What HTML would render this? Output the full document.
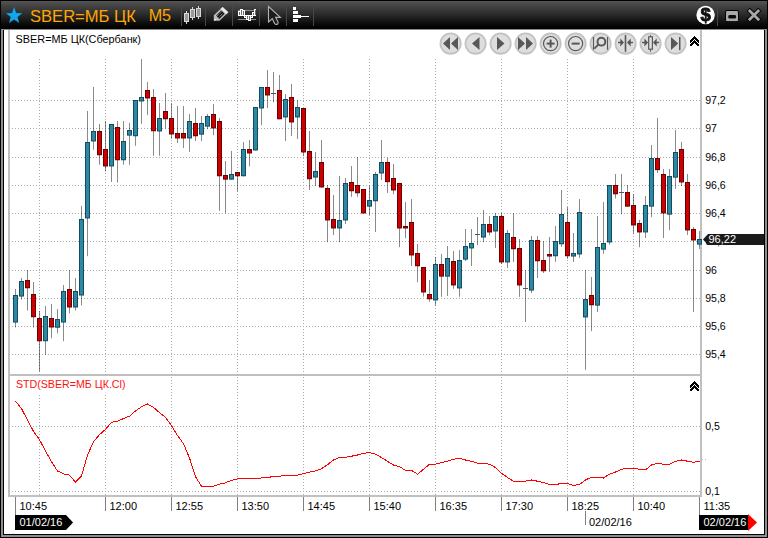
<!DOCTYPE html>
<html lang="ru"><head><meta charset="utf-8"><title>SBER=МБ ЦК M5</title>
<style>
html,body{margin:0;padding:0;background:#000;}
body{width:768px;height:538px;overflow:hidden;position:relative;}
svg{position:absolute;left:0;top:0;display:block;}
text{font-family:"Liberation Sans",sans-serif;}
.t11{font-size:11px;fill:#000;}
.w11{font-size:11px;fill:#fff;}
.ce{shape-rendering:crispEdges;}
</style></head><body>
<svg width="768" height="538" viewBox="0 0 768 538">
<defs>
<linearGradient id="tb" x1="0" y1="0" x2="0" y2="1">
<stop offset="0" stop-color="#555555"/><stop offset="0.12" stop-color="#484848"/><stop offset="0.5" stop-color="#292929"/><stop offset="0.85" stop-color="#080808"/><stop offset="1" stop-color="#000000"/>
</linearGradient>
<radialGradient id="btn" cx="0.5" cy="0.5" r="0.5">
<stop offset="0" stop-color="#e2e2e2"/><stop offset="0.8" stop-color="#dedede"/><stop offset="0.86" stop-color="#c6c6c6"/><stop offset="0.95" stop-color="#cccccc"/><stop offset="1" stop-color="#e8e8e8"/>
</radialGradient>
<filter id="nf" x="-20%" y="-20%" width="140%" height="140%" color-interpolation-filters="sRGB"><feOffset dx="0" dy="0"/></filter>
</defs>

<g class="ce">
<rect x="0" y="0" width="768" height="538" fill="#000"/>
<rect x="1" y="1" width="766" height="28" fill="url(#tb)"/>
<rect x="1" y="29" width="766" height="508" fill="#8e8e8e"/>
<rect x="3" y="30" width="762" height="505" fill="#000"/>
<rect x="4" y="30" width="760" height="504" fill="#fff"/>
<rect x="3" y="29" width="762" height="1" fill="#8a8a8a"/>
<rect x="8" y="30" width="2" height="467" fill="#c0c0c0"/>
<rect x="700" y="30" width="2" height="467" fill="#c0c0c0"/>
<rect x="8" y="495" width="694" height="2" fill="#c0c0c0"/>
<rect x="8" y="374" width="694" height="2" fill="#c0c0c0"/>
</g>
<g class="ce" stroke="#acacac" stroke-width="1" stroke-dasharray="1 2" fill="none">
<path d="M9 100.5H700"/>
<path d="M9 128.5H700"/>
<path d="M9 157.5H700"/>
<path d="M9 185.5H700"/>
<path d="M9 213.5H700"/>
<path d="M9 241.5H700"/>
<path d="M9 270.5H700"/>
<path d="M9 298.5H700"/>
<path d="M9 326.5H700"/>
<path d="M9 354.5H700"/>
<path d="M9 426.5H700"/>
<path d="M9 491.5H700"/>
<path d="M39.5 59V495"/>
<path d="M105.5 59V495"/>
<path d="M171.5 59V495"/>
<path d="M237.5 59V495"/>
<path d="M303.5 59V495"/>
<path d="M369.5 59V495"/>
<path d="M435.5 59V495"/>
<path d="M501.5 59V495"/>
<path d="M567.5 59V495"/>
<path d="M633.5 59V495"/>
</g>
<rect class="ce" x="10" y="376" width="118" height="18" fill="#fff"/>
<g class="ce" fill="#000" fill-opacity="0.46">
<rect x="15" y="289" width="1" height="38"/>
<rect x="15" y="327" width="1" height="1" fill-opacity="0.18"/>
<rect x="21" y="278" width="1" height="21"/>
<rect x="21" y="299" width="1" height="1" fill-opacity="0.23"/>
<rect x="27" y="270" width="1" height="40"/>
<rect x="27" y="310" width="1" height="1" fill-opacity="0.23"/>
<rect x="33" y="282" width="1" height="45"/>
<rect x="33" y="327" width="1" height="1" fill-opacity="0.23"/>
<rect x="39" y="311" width="1" height="60"/>
<rect x="39" y="371" width="1" height="1" fill-opacity="0.23"/>
<rect x="45" y="306" width="1" height="48"/>
<rect x="45" y="354" width="1" height="1" fill-opacity="0.37"/>
<rect x="51" y="304" width="1" height="34"/>
<rect x="51" y="338" width="1" height="1" fill-opacity="0.09"/>
<rect x="57" y="309" width="1" height="24"/>
<rect x="57" y="333" width="1" height="1" fill-opacity="0.12"/>
<rect x="63" y="285" width="1" height="56"/>
<rect x="63" y="341" width="1" height="1" fill-opacity="0.09"/>
<rect x="69" y="270" width="1" height="43"/>
<rect x="69" y="313" width="1" height="1" fill-opacity="0.23"/>
<rect x="75" y="278" width="1" height="32"/>
<rect x="75" y="310" width="1" height="1" fill-opacity="0.23"/>
<rect x="81" y="206" width="1" height="99"/>
<rect x="81" y="305" width="1" height="1" fill-opacity="0.23"/>
<rect x="87" y="111" width="1" height="145"/>
<rect x="87" y="256" width="1" height="1" fill-opacity="0.09"/>
<rect x="93" y="87" width="1" height="62"/>
<rect x="93" y="149" width="1" height="1" fill-opacity="0.37"/>
<rect x="99" y="124" width="1" height="40"/>
<rect x="99" y="164" width="1" height="1" fill-opacity="0.37"/>
<rect x="105" y="121" width="1" height="50"/>
<rect x="105" y="171" width="1" height="1" fill-opacity="0.23"/>
<rect x="111" y="124" width="1" height="58"/>
<rect x="117" y="121" width="1" height="61"/>
<rect x="117" y="182" width="1" height="1" fill-opacity="0.23"/>
<rect x="123" y="121" width="1" height="43"/>
<rect x="123" y="164" width="1" height="1" fill-opacity="0.37"/>
<rect x="129" y="123" width="1" height="41"/>
<rect x="129" y="164" width="1" height="1" fill-opacity="0.37"/>
<rect x="135" y="100" width="1" height="45"/>
<rect x="135" y="145" width="1" height="1" fill-opacity="0.37"/>
<rect x="141" y="59" width="1" height="64"/>
<rect x="141" y="123" width="1" height="1" fill-opacity="0.37"/>
<rect x="147" y="82" width="1" height="33"/>
<rect x="147" y="115" width="1" height="1" fill-opacity="0.05"/>
<rect x="153" y="89" width="1" height="66"/>
<rect x="153" y="155" width="1" height="1" fill-opacity="0.37"/>
<rect x="159" y="103" width="1" height="52"/>
<rect x="159" y="155" width="1" height="1" fill-opacity="0.37"/>
<rect x="165" y="93" width="1" height="35"/>
<rect x="165" y="128" width="1" height="1" fill-opacity="0.32"/>
<rect x="171" y="103" width="1" height="35"/>
<rect x="171" y="138" width="1" height="1" fill-opacity="0.37"/>
<rect x="177" y="106" width="1" height="37"/>
<rect x="183" y="106" width="1" height="42"/>
<rect x="189" y="114" width="1" height="37"/>
<rect x="189" y="151" width="1" height="1" fill-opacity="0.37"/>
<rect x="195" y="108" width="1" height="33"/>
<rect x="201" y="116" width="1" height="25"/>
<rect x="207" y="114" width="1" height="15"/>
<rect x="207" y="129" width="1" height="1" fill-opacity="0.09"/>
<rect x="213" y="104" width="1" height="31"/>
<rect x="213" y="135" width="1" height="1" fill-opacity="0.09"/>
<rect x="219" y="118" width="1" height="92"/>
<rect x="219" y="210" width="1" height="1" fill-opacity="0.37"/>
<rect x="225" y="161" width="1" height="52"/>
<rect x="225" y="213" width="1" height="1" fill-opacity="0.14"/>
<rect x="231" y="151" width="1" height="28"/>
<rect x="231" y="179" width="1" height="1" fill-opacity="0.32"/>
<rect x="237" y="172" width="1" height="19"/>
<rect x="237" y="191" width="1" height="1" fill-opacity="0.14"/>
<rect x="243" y="142" width="1" height="34"/>
<rect x="243" y="176" width="1" height="1" fill-opacity="0.14"/>
<rect x="249" y="140" width="1" height="26"/>
<rect x="249" y="166" width="1" height="1" fill-opacity="0.14"/>
<rect x="255" y="107" width="1" height="43"/>
<rect x="255" y="150" width="1" height="1" fill-opacity="0.23"/>
<rect x="261" y="87" width="1" height="38"/>
<rect x="261" y="125" width="1" height="1" fill-opacity="0.05"/>
<rect x="267" y="70" width="1" height="38"/>
<rect x="273" y="72" width="1" height="30"/>
<rect x="273" y="102" width="1" height="1" fill-opacity="0.09"/>
<rect x="279" y="75" width="1" height="44"/>
<rect x="279" y="119" width="1" height="1" fill-opacity="0.14"/>
<rect x="285" y="94" width="1" height="47"/>
<rect x="291" y="84" width="1" height="52"/>
<rect x="297" y="100" width="1" height="39"/>
<rect x="303" y="108" width="1" height="48"/>
<rect x="309" y="131" width="1" height="59"/>
<rect x="309" y="190" width="1" height="1" fill-opacity="0.05"/>
<rect x="315" y="152" width="1" height="34"/>
<rect x="321" y="140" width="1" height="47"/>
<rect x="321" y="187" width="1" height="1" fill-opacity="0.23"/>
<rect x="327" y="185" width="1" height="57"/>
<rect x="327" y="242" width="1" height="1" fill-opacity="0.09"/>
<rect x="333" y="195" width="1" height="40"/>
<rect x="339" y="176" width="1" height="66"/>
<rect x="339" y="242" width="1" height="1" fill-opacity="0.09"/>
<rect x="345" y="178" width="1" height="46"/>
<rect x="351" y="166" width="1" height="30"/>
<rect x="351" y="196" width="1" height="1" fill-opacity="0.37"/>
<rect x="357" y="157" width="1" height="39"/>
<rect x="357" y="196" width="1" height="1" fill-opacity="0.37"/>
<rect x="363" y="189" width="1" height="24"/>
<rect x="363" y="213" width="1" height="1" fill-opacity="0.23"/>
<rect x="369" y="185" width="1" height="30"/>
<rect x="369" y="215" width="1" height="1" fill-opacity="0.09"/>
<rect x="375" y="172" width="1" height="60"/>
<rect x="381" y="140" width="1" height="40"/>
<rect x="387" y="158" width="1" height="35"/>
<rect x="393" y="164" width="1" height="30"/>
<rect x="393" y="194" width="1" height="1" fill-opacity="0.09"/>
<rect x="399" y="183" width="1" height="64"/>
<rect x="399" y="247" width="1" height="1" fill-opacity="0.09"/>
<rect x="405" y="202" width="1" height="36"/>
<rect x="405" y="238" width="1" height="1" fill-opacity="0.09"/>
<rect x="411" y="199" width="1" height="67"/>
<rect x="417" y="244" width="1" height="38"/>
<rect x="417" y="282" width="1" height="1" fill-opacity="0.09"/>
<rect x="423" y="267" width="1" height="29"/>
<rect x="423" y="296" width="1" height="1" fill-opacity="0.32"/>
<rect x="429" y="280" width="1" height="21"/>
<rect x="429" y="301" width="1" height="1" fill-opacity="0.32"/>
<rect x="435" y="257" width="1" height="48"/>
<rect x="435" y="305" width="1" height="1" fill-opacity="0.23"/>
<rect x="441" y="254" width="1" height="42"/>
<rect x="441" y="296" width="1" height="1" fill-opacity="0.37"/>
<rect x="447" y="246" width="1" height="50"/>
<rect x="453" y="251" width="1" height="37"/>
<rect x="453" y="288" width="1" height="1" fill-opacity="0.37"/>
<rect x="459" y="250" width="1" height="46"/>
<rect x="459" y="296" width="1" height="1" fill-opacity="0.37"/>
<rect x="465" y="229" width="1" height="32"/>
<rect x="471" y="229" width="1" height="37"/>
<rect x="477" y="217" width="1" height="28"/>
<rect x="477" y="245" width="1" height="1" fill-opacity="0.05"/>
<rect x="483" y="210" width="1" height="32"/>
<rect x="483" y="242" width="1" height="1" fill-opacity="0.09"/>
<rect x="489" y="216" width="1" height="19"/>
<rect x="489" y="235" width="1" height="1" fill-opacity="0.09"/>
<rect x="495" y="213" width="1" height="35"/>
<rect x="501" y="213" width="1" height="51"/>
<rect x="507" y="230" width="1" height="38"/>
<rect x="513" y="213" width="1" height="49"/>
<rect x="519" y="239" width="1" height="57"/>
<rect x="519" y="296" width="1" height="1" fill-opacity="0.41"/>
<rect x="525" y="270" width="1" height="52"/>
<rect x="531" y="236" width="1" height="56"/>
<rect x="531" y="292" width="1" height="1" fill-opacity="0.41"/>
<rect x="537" y="236" width="1" height="42"/>
<rect x="543" y="241" width="1" height="32"/>
<rect x="549" y="237" width="1" height="34"/>
<rect x="549" y="271" width="1" height="1" fill-opacity="0.37"/>
<rect x="555" y="226" width="1" height="35"/>
<rect x="555" y="261" width="1" height="1" fill-opacity="0.37"/>
<rect x="561" y="190" width="1" height="56"/>
<rect x="561" y="246" width="1" height="1" fill-opacity="0.37"/>
<rect x="567" y="207" width="1" height="51"/>
<rect x="567" y="258" width="1" height="1" fill-opacity="0.37"/>
<rect x="573" y="233" width="1" height="29"/>
<rect x="579" y="199" width="1" height="59"/>
<rect x="585" y="270" width="1" height="99"/>
<rect x="585" y="369" width="1" height="1" fill-opacity="0.37"/>
<rect x="591" y="277" width="1" height="54"/>
<rect x="591" y="331" width="1" height="1" fill-opacity="0.09"/>
<rect x="597" y="216" width="1" height="96"/>
<rect x="603" y="202" width="1" height="51"/>
<rect x="603" y="253" width="1" height="1" fill-opacity="0.37"/>
<rect x="609" y="185" width="1" height="59"/>
<rect x="609" y="244" width="1" height="1" fill-opacity="0.32"/>
<rect x="615" y="174" width="1" height="24"/>
<rect x="615" y="198" width="1" height="1" fill-opacity="0.23"/>
<rect x="621" y="174" width="1" height="40"/>
<rect x="621" y="214" width="1" height="1" fill-opacity="0.14"/>
<rect x="627" y="185" width="1" height="21"/>
<rect x="627" y="206" width="1" height="1" fill-opacity="0.32"/>
<rect x="633" y="194" width="1" height="39"/>
<rect x="633" y="233" width="1" height="1" fill-opacity="0.37"/>
<rect x="639" y="220" width="1" height="27"/>
<rect x="639" y="247" width="1" height="1" fill-opacity="0.09"/>
<rect x="645" y="196" width="1" height="42"/>
<rect x="651" y="145" width="1" height="72"/>
<rect x="651" y="217" width="1" height="1" fill-opacity="0.09"/>
<rect x="657" y="118" width="1" height="55"/>
<rect x="663" y="169" width="1" height="69"/>
<rect x="669" y="169" width="1" height="61"/>
<rect x="669" y="230" width="1" height="1" fill-opacity="0.09"/>
<rect x="675" y="130" width="1" height="58"/>
<rect x="675" y="188" width="1" height="1" fill-opacity="0.37"/>
<rect x="681" y="142" width="1" height="44"/>
<rect x="687" y="174" width="1" height="61"/>
<rect x="693" y="227" width="1" height="85"/>
<rect x="699" y="231" width="1" height="18"/>
</g><g class="ce">
<rect x="13" y="295" width="5" height="27" fill="#114c60"/>
<rect x="13" y="322" width="5" height="1" fill="#114c60" fill-opacity="0.55"/>
<rect x="14" y="296" width="3" height="25" fill="#2f88a2"/>
<rect x="14" y="321" width="3" height="1" fill="#2f88a2" fill-opacity="0.55"/>
<rect x="19" y="281" width="5" height="15" fill="#114c60"/>
<rect x="19" y="296" width="5" height="1" fill="#114c60" fill-opacity="0.55"/>
<rect x="20" y="282" width="3" height="13" fill="#2f88a2"/>
<rect x="20" y="295" width="3" height="1" fill="#2f88a2" fill-opacity="0.55"/>
<rect x="25" y="280" width="5" height="8" fill="#6a0000"/>
<rect x="25" y="288" width="5" height="1" fill="#6a0000" fill-opacity="0.25"/>
<rect x="26" y="281" width="3" height="6" fill="#cc0000"/>
<rect x="26" y="287" width="3" height="1" fill="#cc0000" fill-opacity="0.25"/>
<rect x="31" y="294" width="5" height="23" fill="#6a0000"/>
<rect x="31" y="317" width="5" height="1" fill="#6a0000" fill-opacity="0.25"/>
<rect x="32" y="295" width="3" height="21" fill="#cc0000"/>
<rect x="32" y="316" width="3" height="1" fill="#cc0000" fill-opacity="0.25"/>
<rect x="37" y="318" width="5" height="23" fill="#6a0000"/>
<rect x="37" y="341" width="5" height="1" fill="#6a0000" fill-opacity="0.25"/>
<rect x="38" y="319" width="3" height="21" fill="#cc0000"/>
<rect x="38" y="340" width="3" height="1" fill="#cc0000" fill-opacity="0.25"/>
<rect x="43" y="316" width="5" height="25" fill="#114c60"/>
<rect x="43" y="341" width="5" height="1" fill="#114c60" fill-opacity="0.25"/>
<rect x="44" y="317" width="3" height="23" fill="#2f88a2"/>
<rect x="44" y="340" width="3" height="1" fill="#2f88a2" fill-opacity="0.25"/>
<rect x="49" y="318" width="5" height="9" fill="#6a0000"/>
<rect x="49" y="327" width="5" height="1" fill="#6a0000" fill-opacity="0.50"/>
<rect x="50" y="319" width="3" height="7" fill="#cc0000"/>
<rect x="50" y="326" width="3" height="1" fill="#cc0000" fill-opacity="0.50"/>
<rect x="55" y="319" width="5" height="8" fill="#114c60"/>
<rect x="55" y="327" width="5" height="1" fill="#114c60" fill-opacity="0.75"/>
<rect x="56" y="320" width="3" height="6" fill="#2f88a2"/>
<rect x="56" y="326" width="3" height="1" fill="#2f88a2" fill-opacity="0.75"/>
<rect x="61" y="291" width="5" height="31" fill="#114c60"/>
<rect x="61" y="322" width="5" height="1" fill="#114c60" fill-opacity="0.50"/>
<rect x="62" y="292" width="3" height="29" fill="#2f88a2"/>
<rect x="62" y="321" width="3" height="1" fill="#2f88a2" fill-opacity="0.50"/>
<rect x="67" y="289" width="5" height="18" fill="#6a0000"/>
<rect x="67" y="307" width="5" height="1" fill="#6a0000" fill-opacity="0.50"/>
<rect x="68" y="290" width="3" height="16" fill="#cc0000"/>
<rect x="68" y="306" width="3" height="1" fill="#cc0000" fill-opacity="0.50"/>
<rect x="73" y="291" width="5" height="16" fill="#114c60"/>
<rect x="73" y="307" width="5" height="1" fill="#114c60" fill-opacity="0.50"/>
<rect x="74" y="292" width="3" height="14" fill="#2f88a2"/>
<rect x="74" y="306" width="3" height="1" fill="#2f88a2" fill-opacity="0.50"/>
<rect x="79" y="219" width="5" height="76" fill="#114c60"/>
<rect x="79" y="295" width="5" height="1" fill="#114c60" fill-opacity="0.50"/>
<rect x="80" y="220" width="3" height="74" fill="#2f88a2"/>
<rect x="80" y="294" width="3" height="1" fill="#2f88a2" fill-opacity="0.50"/>
<rect x="85" y="142" width="5" height="76" fill="#114c60"/>
<rect x="85" y="218" width="5" height="1" fill="#114c60" fill-opacity="0.45"/>
<rect x="86" y="143" width="3" height="74" fill="#2f88a2"/>
<rect x="86" y="217" width="3" height="1" fill="#2f88a2" fill-opacity="0.45"/>
<rect x="91" y="131" width="5" height="10" fill="#114c60"/>
<rect x="91" y="141" width="5" height="1" fill="#114c60" fill-opacity="0.45"/>
<rect x="92" y="132" width="3" height="8" fill="#2f88a2"/>
<rect x="92" y="140" width="3" height="1" fill="#2f88a2" fill-opacity="0.45"/>
<rect x="97" y="131" width="5" height="24" fill="#6a0000"/>
<rect x="97" y="155" width="5" height="1" fill="#6a0000" fill-opacity="0.25"/>
<rect x="98" y="132" width="3" height="22" fill="#cc0000"/>
<rect x="98" y="154" width="3" height="1" fill="#cc0000" fill-opacity="0.25"/>
<rect x="103" y="149" width="5" height="17" fill="#6a0000"/>
<rect x="103" y="166" width="5" height="1" fill="#6a0000" fill-opacity="0.45"/>
<rect x="104" y="150" width="3" height="15" fill="#cc0000"/>
<rect x="104" y="165" width="3" height="1" fill="#cc0000" fill-opacity="0.45"/>
<rect x="109" y="124" width="5" height="42" fill="#114c60"/>
<rect x="109" y="166" width="5" height="1" fill="#114c60" fill-opacity="0.45"/>
<rect x="110" y="125" width="3" height="40" fill="#2f88a2"/>
<rect x="110" y="165" width="3" height="1" fill="#2f88a2" fill-opacity="0.45"/>
<rect x="115" y="127" width="5" height="33" fill="#6a0000"/>
<rect x="115" y="160" width="5" height="1" fill="#6a0000" fill-opacity="0.25"/>
<rect x="116" y="128" width="3" height="31" fill="#cc0000"/>
<rect x="116" y="159" width="3" height="1" fill="#cc0000" fill-opacity="0.25"/>
<rect x="121" y="141" width="5" height="19" fill="#114c60"/>
<rect x="121" y="160" width="5" height="1" fill="#114c60" fill-opacity="0.25"/>
<rect x="122" y="142" width="3" height="17" fill="#2f88a2"/>
<rect x="122" y="159" width="3" height="1" fill="#2f88a2" fill-opacity="0.25"/>
<rect x="127" y="130" width="5" height="5" fill="#114c60"/>
<rect x="127" y="135" width="5" height="1" fill="#114c60" fill-opacity="0.65"/>
<rect x="128" y="131" width="3" height="3" fill="#2f88a2"/>
<rect x="128" y="134" width="3" height="1" fill="#2f88a2" fill-opacity="0.65"/>
<rect x="133" y="100" width="5" height="36" fill="#114c60"/>
<rect x="133" y="136" width="5" height="1" fill="#114c60" fill-opacity="0.25"/>
<rect x="134" y="101" width="3" height="34" fill="#2f88a2"/>
<rect x="134" y="135" width="3" height="1" fill="#2f88a2" fill-opacity="0.25"/>
<rect x="139" y="97" width="5" height="4" fill="#114c60"/>
<rect x="139" y="101" width="5" height="1" fill="#114c60" fill-opacity="0.45"/>
<rect x="140" y="98" width="3" height="2" fill="#2f88a2"/>
<rect x="140" y="100" width="3" height="1" fill="#2f88a2" fill-opacity="0.45"/>
<rect x="145" y="90" width="5" height="8" fill="#6a0000"/>
<rect x="145" y="98" width="5" height="1" fill="#6a0000" fill-opacity="0.45"/>
<rect x="146" y="91" width="3" height="6" fill="#cc0000"/>
<rect x="146" y="97" width="3" height="1" fill="#cc0000" fill-opacity="0.45"/>
<rect x="151" y="97" width="5" height="34" fill="#6a0000"/>
<rect x="151" y="131" width="5" height="1" fill="#6a0000" fill-opacity="0.25"/>
<rect x="152" y="98" width="3" height="32" fill="#cc0000"/>
<rect x="152" y="130" width="3" height="1" fill="#cc0000" fill-opacity="0.25"/>
<rect x="157" y="118" width="5" height="13" fill="#114c60"/>
<rect x="157" y="131" width="5" height="1" fill="#114c60" fill-opacity="0.45"/>
<rect x="158" y="119" width="3" height="11" fill="#2f88a2"/>
<rect x="158" y="130" width="3" height="1" fill="#2f88a2" fill-opacity="0.45"/>
<rect x="163" y="111" width="5" height="8" fill="#6a0000"/>
<rect x="163" y="119" width="5" height="1" fill="#6a0000" fill-opacity="0.25"/>
<rect x="164" y="112" width="3" height="6" fill="#cc0000"/>
<rect x="164" y="118" width="3" height="1" fill="#cc0000" fill-opacity="0.25"/>
<rect x="169" y="118" width="5" height="16" fill="#6a0000"/>
<rect x="169" y="134" width="5" height="1" fill="#6a0000" fill-opacity="0.45"/>
<rect x="170" y="119" width="3" height="14" fill="#cc0000"/>
<rect x="170" y="133" width="3" height="1" fill="#cc0000" fill-opacity="0.45"/>
<rect x="175" y="133" width="5" height="5" fill="#6a0000"/>
<rect x="175" y="138" width="5" height="1" fill="#6a0000" fill-opacity="0.45"/>
<rect x="176" y="134" width="3" height="3" fill="#cc0000"/>
<rect x="176" y="137" width="3" height="1" fill="#cc0000" fill-opacity="0.45"/>
<rect x="181" y="133" width="5" height="5" fill="#6a0000"/>
<rect x="181" y="138" width="5" height="1" fill="#6a0000" fill-opacity="0.45"/>
<rect x="182" y="134" width="3" height="3" fill="#cc0000"/>
<rect x="182" y="137" width="3" height="1" fill="#cc0000" fill-opacity="0.45"/>
<rect x="187" y="121" width="5" height="17" fill="#114c60"/>
<rect x="187" y="138" width="5" height="1" fill="#114c60" fill-opacity="0.45"/>
<rect x="188" y="122" width="3" height="15" fill="#2f88a2"/>
<rect x="188" y="137" width="3" height="1" fill="#2f88a2" fill-opacity="0.45"/>
<rect x="193" y="123" width="5" height="13" fill="#6a0000"/>
<rect x="193" y="136" width="5" height="1" fill="#6a0000" fill-opacity="0.25"/>
<rect x="194" y="124" width="3" height="11" fill="#cc0000"/>
<rect x="194" y="135" width="3" height="1" fill="#cc0000" fill-opacity="0.25"/>
<rect x="199" y="123" width="5" height="11" fill="#114c60"/>
<rect x="199" y="134" width="5" height="1" fill="#114c60" fill-opacity="0.65"/>
<rect x="200" y="124" width="3" height="9" fill="#2f88a2"/>
<rect x="200" y="133" width="3" height="1" fill="#2f88a2" fill-opacity="0.65"/>
<rect x="205" y="116" width="5" height="10" fill="#114c60"/>
<rect x="205" y="126" width="5" height="1" fill="#114c60" fill-opacity="0.65"/>
<rect x="206" y="117" width="3" height="8" fill="#2f88a2"/>
<rect x="206" y="125" width="3" height="1" fill="#2f88a2" fill-opacity="0.65"/>
<rect x="211" y="114" width="5" height="14" fill="#6a0000"/>
<rect x="211" y="128" width="5" height="1" fill="#6a0000" fill-opacity="0.45"/>
<rect x="212" y="115" width="3" height="12" fill="#cc0000"/>
<rect x="212" y="127" width="3" height="1" fill="#cc0000" fill-opacity="0.45"/>
<rect x="217" y="121" width="5" height="55" fill="#6a0000"/>
<rect x="217" y="176" width="5" height="1" fill="#6a0000" fill-opacity="0.25"/>
<rect x="218" y="122" width="3" height="53" fill="#cc0000"/>
<rect x="218" y="175" width="3" height="1" fill="#cc0000" fill-opacity="0.25"/>
<rect x="223" y="175" width="5" height="4" fill="#6a0000"/>
<rect x="223" y="179" width="5" height="1" fill="#6a0000" fill-opacity="0.65"/>
<rect x="224" y="176" width="3" height="2" fill="#cc0000"/>
<rect x="224" y="178" width="3" height="1" fill="#cc0000" fill-opacity="0.65"/>
<rect x="229" y="174" width="5" height="5" fill="#114c60"/>
<rect x="229" y="179" width="5" height="1" fill="#114c60" fill-opacity="0.65"/>
<rect x="230" y="175" width="3" height="3" fill="#2f88a2"/>
<rect x="230" y="178" width="3" height="1" fill="#2f88a2" fill-opacity="0.65"/>
<rect x="235" y="172" width="5" height="4" fill="#6a0000"/>
<rect x="235" y="176" width="5" height="1" fill="#6a0000" fill-opacity="0.25"/>
<rect x="236" y="173" width="3" height="2" fill="#cc0000"/>
<rect x="236" y="175" width="3" height="1" fill="#cc0000" fill-opacity="0.25"/>
<rect x="241" y="149" width="5" height="27" fill="#114c60"/>
<rect x="241" y="176" width="5" height="1" fill="#114c60" fill-opacity="0.25"/>
<rect x="242" y="150" width="3" height="25" fill="#2f88a2"/>
<rect x="242" y="175" width="3" height="1" fill="#2f88a2" fill-opacity="0.25"/>
<rect x="247" y="149" width="5" height="4" fill="#6a0000"/>
<rect x="247" y="153" width="5" height="1" fill="#6a0000" fill-opacity="0.45"/>
<rect x="248" y="150" width="3" height="2" fill="#cc0000"/>
<rect x="248" y="152" width="3" height="1" fill="#cc0000" fill-opacity="0.45"/>
<rect x="253" y="107" width="5" height="43" fill="#114c60"/>
<rect x="253" y="150" width="5" height="1" fill="#114c60" fill-opacity="0.45"/>
<rect x="254" y="108" width="3" height="41" fill="#2f88a2"/>
<rect x="254" y="149" width="3" height="1" fill="#2f88a2" fill-opacity="0.45"/>
<rect x="259" y="87" width="5" height="21" fill="#114c60"/>
<rect x="259" y="108" width="5" height="1" fill="#114c60" fill-opacity="0.45"/>
<rect x="260" y="88" width="3" height="19" fill="#2f88a2"/>
<rect x="260" y="107" width="3" height="1" fill="#2f88a2" fill-opacity="0.45"/>
<rect x="265" y="87" width="5" height="8" fill="#6a0000"/>
<rect x="265" y="95" width="5" height="1" fill="#6a0000" fill-opacity="0.45"/>
<rect x="266" y="88" width="3" height="6" fill="#cc0000"/>
<rect x="266" y="94" width="3" height="1" fill="#cc0000" fill-opacity="0.45"/>
<rect x="271" y="93" width="5" height="1" fill="#555"/>
<rect x="277" y="90" width="5" height="29" fill="#6a0000"/>
<rect x="277" y="119" width="5" height="1" fill="#6a0000" fill-opacity="0.25"/>
<rect x="278" y="91" width="3" height="27" fill="#cc0000"/>
<rect x="278" y="118" width="3" height="1" fill="#cc0000" fill-opacity="0.25"/>
<rect x="283" y="99" width="5" height="18" fill="#114c60"/>
<rect x="283" y="117" width="5" height="1" fill="#114c60" fill-opacity="0.45"/>
<rect x="284" y="100" width="3" height="16" fill="#2f88a2"/>
<rect x="284" y="116" width="3" height="1" fill="#2f88a2" fill-opacity="0.45"/>
<rect x="289" y="97" width="5" height="25" fill="#6a0000"/>
<rect x="289" y="122" width="5" height="1" fill="#6a0000" fill-opacity="0.45"/>
<rect x="290" y="98" width="3" height="23" fill="#cc0000"/>
<rect x="290" y="121" width="3" height="1" fill="#cc0000" fill-opacity="0.45"/>
<rect x="295" y="107" width="5" height="10" fill="#114c60"/>
<rect x="295" y="117" width="5" height="1" fill="#114c60" fill-opacity="0.45"/>
<rect x="296" y="108" width="3" height="8" fill="#2f88a2"/>
<rect x="296" y="116" width="3" height="1" fill="#2f88a2" fill-opacity="0.45"/>
<rect x="301" y="108" width="5" height="44" fill="#6a0000"/>
<rect x="301" y="152" width="5" height="1" fill="#6a0000" fill-opacity="0.45"/>
<rect x="302" y="109" width="3" height="42" fill="#cc0000"/>
<rect x="302" y="151" width="3" height="1" fill="#cc0000" fill-opacity="0.45"/>
<rect x="307" y="151" width="5" height="28" fill="#6a0000"/>
<rect x="307" y="179" width="5" height="1" fill="#6a0000" fill-opacity="0.25"/>
<rect x="308" y="152" width="3" height="26" fill="#cc0000"/>
<rect x="308" y="178" width="3" height="1" fill="#cc0000" fill-opacity="0.25"/>
<rect x="313" y="171" width="5" height="6" fill="#114c60"/>
<rect x="313" y="177" width="5" height="1" fill="#114c60" fill-opacity="0.55"/>
<rect x="314" y="172" width="3" height="4" fill="#2f88a2"/>
<rect x="314" y="176" width="3" height="1" fill="#2f88a2" fill-opacity="0.55"/>
<rect x="319" y="162" width="5" height="25" fill="#6a0000"/>
<rect x="319" y="187" width="5" height="1" fill="#6a0000" fill-opacity="0.45"/>
<rect x="320" y="163" width="3" height="23" fill="#cc0000"/>
<rect x="320" y="186" width="3" height="1" fill="#cc0000" fill-opacity="0.45"/>
<rect x="325" y="188" width="5" height="32" fill="#6a0000"/>
<rect x="325" y="220" width="5" height="1" fill="#6a0000" fill-opacity="0.45"/>
<rect x="326" y="189" width="3" height="30" fill="#cc0000"/>
<rect x="326" y="219" width="3" height="1" fill="#cc0000" fill-opacity="0.45"/>
<rect x="331" y="219" width="5" height="9" fill="#6a0000"/>
<rect x="331" y="228" width="5" height="1" fill="#6a0000" fill-opacity="0.45"/>
<rect x="332" y="220" width="3" height="7" fill="#cc0000"/>
<rect x="332" y="227" width="3" height="1" fill="#cc0000" fill-opacity="0.45"/>
<rect x="337" y="220" width="5" height="8" fill="#114c60"/>
<rect x="337" y="228" width="5" height="1" fill="#114c60" fill-opacity="0.45"/>
<rect x="338" y="221" width="3" height="6" fill="#2f88a2"/>
<rect x="338" y="227" width="3" height="1" fill="#2f88a2" fill-opacity="0.45"/>
<rect x="343" y="183" width="5" height="37" fill="#114c60"/>
<rect x="343" y="220" width="5" height="1" fill="#114c60" fill-opacity="0.45"/>
<rect x="344" y="184" width="3" height="35" fill="#2f88a2"/>
<rect x="344" y="219" width="3" height="1" fill="#2f88a2" fill-opacity="0.45"/>
<rect x="349" y="182" width="5" height="9" fill="#6a0000"/>
<rect x="349" y="191" width="5" height="1" fill="#6a0000" fill-opacity="0.25"/>
<rect x="350" y="183" width="3" height="7" fill="#cc0000"/>
<rect x="350" y="190" width="3" height="1" fill="#cc0000" fill-opacity="0.25"/>
<rect x="355" y="185" width="5" height="8" fill="#6a0000"/>
<rect x="355" y="193" width="5" height="1" fill="#6a0000" fill-opacity="0.25"/>
<rect x="356" y="186" width="3" height="6" fill="#cc0000"/>
<rect x="356" y="192" width="3" height="1" fill="#cc0000" fill-opacity="0.25"/>
<rect x="361" y="189" width="5" height="24" fill="#6a0000"/>
<rect x="361" y="213" width="5" height="1" fill="#6a0000" fill-opacity="0.45"/>
<rect x="362" y="190" width="3" height="22" fill="#cc0000"/>
<rect x="362" y="212" width="3" height="1" fill="#cc0000" fill-opacity="0.45"/>
<rect x="367" y="200" width="5" height="6" fill="#114c60"/>
<rect x="367" y="206" width="5" height="1" fill="#114c60" fill-opacity="0.65"/>
<rect x="368" y="201" width="3" height="4" fill="#2f88a2"/>
<rect x="368" y="205" width="3" height="1" fill="#2f88a2" fill-opacity="0.65"/>
<rect x="373" y="174" width="5" height="27" fill="#114c60"/>
<rect x="373" y="201" width="5" height="1" fill="#114c60" fill-opacity="0.25"/>
<rect x="374" y="175" width="3" height="25" fill="#2f88a2"/>
<rect x="374" y="200" width="3" height="1" fill="#2f88a2" fill-opacity="0.25"/>
<rect x="379" y="162" width="5" height="11" fill="#114c60"/>
<rect x="379" y="173" width="5" height="1" fill="#114c60" fill-opacity="0.45"/>
<rect x="380" y="163" width="3" height="9" fill="#2f88a2"/>
<rect x="380" y="172" width="3" height="1" fill="#2f88a2" fill-opacity="0.45"/>
<rect x="385" y="162" width="5" height="20" fill="#6a0000"/>
<rect x="385" y="182" width="5" height="1" fill="#6a0000" fill-opacity="0.15"/>
<rect x="386" y="163" width="3" height="18" fill="#cc0000"/>
<rect x="386" y="181" width="3" height="1" fill="#cc0000" fill-opacity="0.15"/>
<rect x="391" y="178" width="5" height="12" fill="#6a0000"/>
<rect x="391" y="190" width="5" height="1" fill="#6a0000" fill-opacity="0.45"/>
<rect x="392" y="179" width="3" height="10" fill="#cc0000"/>
<rect x="392" y="189" width="3" height="1" fill="#cc0000" fill-opacity="0.45"/>
<rect x="397" y="183" width="5" height="45" fill="#6a0000"/>
<rect x="397" y="228" width="5" height="1" fill="#6a0000" fill-opacity="0.45"/>
<rect x="398" y="184" width="3" height="43" fill="#cc0000"/>
<rect x="398" y="227" width="3" height="1" fill="#cc0000" fill-opacity="0.45"/>
<rect x="403" y="226" width="5" height="2" fill="#6a0000"/>
<rect x="403" y="228" width="5" height="1" fill="#6a0000" fill-opacity="0.45"/>
<rect x="404" y="227" width="3" height="1" fill="#cc0000" fill-opacity="0.45"/>
<rect x="409" y="222" width="5" height="33" fill="#6a0000"/>
<rect x="409" y="255" width="5" height="1" fill="#6a0000" fill-opacity="0.45"/>
<rect x="410" y="223" width="3" height="31" fill="#cc0000"/>
<rect x="410" y="254" width="3" height="1" fill="#cc0000" fill-opacity="0.45"/>
<rect x="415" y="253" width="5" height="13" fill="#6a0000"/>
<rect x="415" y="266" width="5" height="1" fill="#6a0000" fill-opacity="0.25"/>
<rect x="416" y="254" width="3" height="11" fill="#cc0000"/>
<rect x="416" y="265" width="3" height="1" fill="#cc0000" fill-opacity="0.25"/>
<rect x="421" y="267" width="5" height="25" fill="#6a0000"/>
<rect x="421" y="292" width="5" height="1" fill="#6a0000" fill-opacity="0.45"/>
<rect x="422" y="268" width="3" height="23" fill="#cc0000"/>
<rect x="422" y="291" width="3" height="1" fill="#cc0000" fill-opacity="0.45"/>
<rect x="427" y="294" width="5" height="5" fill="#6a0000"/>
<rect x="427" y="299" width="5" height="1" fill="#6a0000" fill-opacity="0.25"/>
<rect x="428" y="295" width="3" height="3" fill="#cc0000"/>
<rect x="428" y="298" width="3" height="1" fill="#cc0000" fill-opacity="0.25"/>
<rect x="433" y="264" width="5" height="36" fill="#114c60"/>
<rect x="433" y="300" width="5" height="1" fill="#114c60" fill-opacity="0.45"/>
<rect x="434" y="265" width="3" height="34" fill="#2f88a2"/>
<rect x="434" y="299" width="3" height="1" fill="#2f88a2" fill-opacity="0.45"/>
<rect x="439" y="264" width="5" height="12" fill="#6a0000"/>
<rect x="439" y="276" width="5" height="1" fill="#6a0000" fill-opacity="0.65"/>
<rect x="440" y="265" width="3" height="10" fill="#cc0000"/>
<rect x="440" y="275" width="3" height="1" fill="#cc0000" fill-opacity="0.65"/>
<rect x="445" y="258" width="5" height="18" fill="#114c60"/>
<rect x="445" y="276" width="5" height="1" fill="#114c60" fill-opacity="0.65"/>
<rect x="446" y="259" width="3" height="16" fill="#2f88a2"/>
<rect x="446" y="275" width="3" height="1" fill="#2f88a2" fill-opacity="0.65"/>
<rect x="451" y="261" width="5" height="24" fill="#6a0000"/>
<rect x="451" y="285" width="5" height="1" fill="#6a0000" fill-opacity="0.45"/>
<rect x="452" y="262" width="3" height="22" fill="#cc0000"/>
<rect x="452" y="284" width="3" height="1" fill="#cc0000" fill-opacity="0.45"/>
<rect x="457" y="260" width="5" height="28" fill="#114c60"/>
<rect x="457" y="288" width="5" height="1" fill="#114c60" fill-opacity="0.45"/>
<rect x="458" y="261" width="3" height="26" fill="#2f88a2"/>
<rect x="458" y="287" width="3" height="1" fill="#2f88a2" fill-opacity="0.45"/>
<rect x="463" y="246" width="5" height="13" fill="#114c60"/>
<rect x="463" y="259" width="5" height="1" fill="#114c60" fill-opacity="0.65"/>
<rect x="464" y="247" width="3" height="11" fill="#2f88a2"/>
<rect x="464" y="258" width="3" height="1" fill="#2f88a2" fill-opacity="0.65"/>
<rect x="469" y="243" width="5" height="5" fill="#114c60"/>
<rect x="469" y="248" width="5" height="1" fill="#114c60" fill-opacity="0.45"/>
<rect x="470" y="244" width="3" height="3" fill="#2f88a2"/>
<rect x="470" y="247" width="3" height="1" fill="#2f88a2" fill-opacity="0.45"/>
<rect x="475" y="234" width="5" height="1" fill="#555"/>
<rect x="481" y="224" width="5" height="13" fill="#114c60"/>
<rect x="481" y="237" width="5" height="1" fill="#114c60" fill-opacity="0.55"/>
<rect x="482" y="225" width="3" height="11" fill="#2f88a2"/>
<rect x="482" y="236" width="3" height="1" fill="#2f88a2" fill-opacity="0.55"/>
<rect x="487" y="224" width="5" height="8" fill="#6a0000"/>
<rect x="487" y="232" width="5" height="1" fill="#6a0000" fill-opacity="0.45"/>
<rect x="488" y="225" width="3" height="6" fill="#cc0000"/>
<rect x="488" y="231" width="3" height="1" fill="#cc0000" fill-opacity="0.45"/>
<rect x="493" y="216" width="5" height="15" fill="#114c60"/>
<rect x="493" y="231" width="5" height="1" fill="#114c60" fill-opacity="0.45"/>
<rect x="494" y="217" width="3" height="13" fill="#2f88a2"/>
<rect x="494" y="230" width="3" height="1" fill="#2f88a2" fill-opacity="0.45"/>
<rect x="499" y="216" width="5" height="46" fill="#6a0000"/>
<rect x="499" y="262" width="5" height="1" fill="#6a0000" fill-opacity="0.45"/>
<rect x="500" y="217" width="3" height="44" fill="#cc0000"/>
<rect x="500" y="261" width="3" height="1" fill="#cc0000" fill-opacity="0.45"/>
<rect x="505" y="233" width="5" height="29" fill="#114c60"/>
<rect x="505" y="262" width="5" height="1" fill="#114c60" fill-opacity="0.45"/>
<rect x="506" y="234" width="3" height="27" fill="#2f88a2"/>
<rect x="506" y="261" width="3" height="1" fill="#2f88a2" fill-opacity="0.45"/>
<rect x="511" y="237" width="5" height="12" fill="#6a0000"/>
<rect x="511" y="249" width="5" height="1" fill="#6a0000" fill-opacity="0.25"/>
<rect x="512" y="238" width="3" height="10" fill="#cc0000"/>
<rect x="512" y="248" width="3" height="1" fill="#cc0000" fill-opacity="0.25"/>
<rect x="517" y="248" width="5" height="37" fill="#6a0000"/>
<rect x="517" y="285" width="5" height="1" fill="#6a0000" fill-opacity="0.45"/>
<rect x="518" y="249" width="3" height="35" fill="#cc0000"/>
<rect x="518" y="284" width="3" height="1" fill="#cc0000" fill-opacity="0.45"/>
<rect x="523" y="288" width="5" height="1" fill="#555"/>
<rect x="529" y="240" width="5" height="50" fill="#114c60"/>
<rect x="529" y="290" width="5" height="1" fill="#114c60" fill-opacity="0.55"/>
<rect x="530" y="241" width="3" height="48" fill="#2f88a2"/>
<rect x="530" y="289" width="3" height="1" fill="#2f88a2" fill-opacity="0.55"/>
<rect x="535" y="240" width="5" height="21" fill="#6a0000"/>
<rect x="535" y="261" width="5" height="1" fill="#6a0000" fill-opacity="0.25"/>
<rect x="536" y="241" width="3" height="19" fill="#cc0000"/>
<rect x="536" y="260" width="3" height="1" fill="#cc0000" fill-opacity="0.25"/>
<rect x="541" y="260" width="5" height="11" fill="#6a0000"/>
<rect x="541" y="271" width="5" height="1" fill="#6a0000" fill-opacity="0.25"/>
<rect x="542" y="261" width="3" height="9" fill="#cc0000"/>
<rect x="542" y="270" width="3" height="1" fill="#cc0000" fill-opacity="0.25"/>
<rect x="547" y="254" width="5" height="2" fill="#6a0000"/>
<rect x="547" y="256" width="5" height="1" fill="#6a0000" fill-opacity="0.55"/>
<rect x="548" y="255" width="3" height="1" fill="#cc0000" fill-opacity="0.55"/>
<rect x="553" y="241" width="5" height="15" fill="#114c60"/>
<rect x="553" y="256" width="5" height="1" fill="#114c60" fill-opacity="0.25"/>
<rect x="554" y="242" width="3" height="13" fill="#2f88a2"/>
<rect x="554" y="255" width="3" height="1" fill="#2f88a2" fill-opacity="0.25"/>
<rect x="559" y="214" width="5" height="30" fill="#114c60"/>
<rect x="559" y="244" width="5" height="1" fill="#114c60" fill-opacity="0.25"/>
<rect x="560" y="215" width="3" height="28" fill="#2f88a2"/>
<rect x="560" y="243" width="3" height="1" fill="#2f88a2" fill-opacity="0.25"/>
<rect x="565" y="222" width="5" height="34" fill="#6a0000"/>
<rect x="565" y="256" width="5" height="1" fill="#6a0000" fill-opacity="0.25"/>
<rect x="566" y="223" width="3" height="32" fill="#cc0000"/>
<rect x="566" y="255" width="3" height="1" fill="#cc0000" fill-opacity="0.25"/>
<rect x="571" y="253" width="5" height="3" fill="#114c60"/>
<rect x="571" y="256" width="5" height="1" fill="#114c60" fill-opacity="0.55"/>
<rect x="572" y="254" width="3" height="1" fill="#2f88a2"/>
<rect x="572" y="255" width="3" height="1" fill="#2f88a2" fill-opacity="0.55"/>
<rect x="577" y="212" width="5" height="42" fill="#114c60"/>
<rect x="577" y="254" width="5" height="1" fill="#114c60" fill-opacity="0.45"/>
<rect x="578" y="213" width="3" height="40" fill="#2f88a2"/>
<rect x="578" y="253" width="3" height="1" fill="#2f88a2" fill-opacity="0.45"/>
<rect x="583" y="299" width="5" height="18" fill="#114c60"/>
<rect x="583" y="317" width="5" height="1" fill="#114c60" fill-opacity="0.45"/>
<rect x="584" y="300" width="3" height="16" fill="#2f88a2"/>
<rect x="584" y="316" width="3" height="1" fill="#2f88a2" fill-opacity="0.45"/>
<rect x="589" y="295" width="5" height="10" fill="#6a0000"/>
<rect x="589" y="305" width="5" height="1" fill="#6a0000" fill-opacity="0.25"/>
<rect x="590" y="296" width="3" height="8" fill="#cc0000"/>
<rect x="590" y="304" width="3" height="1" fill="#cc0000" fill-opacity="0.25"/>
<rect x="595" y="247" width="5" height="58" fill="#114c60"/>
<rect x="595" y="305" width="5" height="1" fill="#114c60" fill-opacity="0.65"/>
<rect x="596" y="248" width="3" height="56" fill="#2f88a2"/>
<rect x="596" y="304" width="3" height="1" fill="#2f88a2" fill-opacity="0.65"/>
<rect x="601" y="243" width="5" height="6" fill="#114c60"/>
<rect x="601" y="249" width="5" height="1" fill="#114c60" fill-opacity="0.65"/>
<rect x="602" y="244" width="3" height="4" fill="#2f88a2"/>
<rect x="602" y="248" width="3" height="1" fill="#2f88a2" fill-opacity="0.65"/>
<rect x="607" y="185" width="5" height="57" fill="#114c60"/>
<rect x="607" y="242" width="5" height="1" fill="#114c60" fill-opacity="0.45"/>
<rect x="608" y="186" width="3" height="55" fill="#2f88a2"/>
<rect x="608" y="241" width="3" height="1" fill="#2f88a2" fill-opacity="0.45"/>
<rect x="613" y="185" width="5" height="9" fill="#6a0000"/>
<rect x="613" y="194" width="5" height="1" fill="#6a0000" fill-opacity="0.25"/>
<rect x="614" y="186" width="3" height="7" fill="#cc0000"/>
<rect x="614" y="193" width="3" height="1" fill="#cc0000" fill-opacity="0.25"/>
<rect x="619" y="192" width="5" height="1" fill="#555"/>
<rect x="625" y="192" width="5" height="14" fill="#6a0000"/>
<rect x="625" y="206" width="5" height="1" fill="#6a0000" fill-opacity="0.65"/>
<rect x="626" y="193" width="3" height="12" fill="#cc0000"/>
<rect x="626" y="205" width="3" height="1" fill="#cc0000" fill-opacity="0.65"/>
<rect x="631" y="205" width="5" height="20" fill="#6a0000"/>
<rect x="631" y="225" width="5" height="1" fill="#6a0000" fill-opacity="0.45"/>
<rect x="632" y="206" width="3" height="18" fill="#cc0000"/>
<rect x="632" y="224" width="3" height="1" fill="#cc0000" fill-opacity="0.45"/>
<rect x="637" y="223" width="5" height="9" fill="#6a0000"/>
<rect x="637" y="232" width="5" height="1" fill="#6a0000" fill-opacity="0.45"/>
<rect x="638" y="224" width="3" height="7" fill="#cc0000"/>
<rect x="638" y="231" width="3" height="1" fill="#cc0000" fill-opacity="0.45"/>
<rect x="643" y="205" width="5" height="27" fill="#114c60"/>
<rect x="643" y="232" width="5" height="1" fill="#114c60" fill-opacity="0.45"/>
<rect x="644" y="206" width="3" height="25" fill="#2f88a2"/>
<rect x="644" y="231" width="3" height="1" fill="#2f88a2" fill-opacity="0.45"/>
<rect x="649" y="158" width="5" height="48" fill="#114c60"/>
<rect x="649" y="206" width="5" height="1" fill="#114c60" fill-opacity="0.65"/>
<rect x="650" y="159" width="3" height="46" fill="#2f88a2"/>
<rect x="650" y="205" width="3" height="1" fill="#2f88a2" fill-opacity="0.65"/>
<rect x="655" y="158" width="5" height="12" fill="#6a0000"/>
<rect x="655" y="170" width="5" height="1" fill="#6a0000" fill-opacity="0.15"/>
<rect x="656" y="159" width="3" height="10" fill="#cc0000"/>
<rect x="656" y="169" width="3" height="1" fill="#cc0000" fill-opacity="0.15"/>
<rect x="661" y="174" width="5" height="39" fill="#6a0000"/>
<rect x="661" y="213" width="5" height="1" fill="#6a0000" fill-opacity="0.45"/>
<rect x="662" y="175" width="3" height="37" fill="#cc0000"/>
<rect x="662" y="212" width="3" height="1" fill="#cc0000" fill-opacity="0.45"/>
<rect x="667" y="176" width="5" height="38" fill="#114c60"/>
<rect x="667" y="214" width="5" height="1" fill="#114c60" fill-opacity="0.65"/>
<rect x="668" y="177" width="3" height="36" fill="#2f88a2"/>
<rect x="668" y="213" width="3" height="1" fill="#2f88a2" fill-opacity="0.65"/>
<rect x="673" y="152" width="5" height="25" fill="#114c60"/>
<rect x="673" y="177" width="5" height="1" fill="#114c60" fill-opacity="0.65"/>
<rect x="674" y="153" width="3" height="23" fill="#2f88a2"/>
<rect x="674" y="176" width="3" height="1" fill="#2f88a2" fill-opacity="0.65"/>
<rect x="679" y="149" width="5" height="33" fill="#6a0000"/>
<rect x="679" y="182" width="5" height="1" fill="#6a0000" fill-opacity="0.45"/>
<rect x="680" y="150" width="3" height="31" fill="#cc0000"/>
<rect x="680" y="181" width="3" height="1" fill="#cc0000" fill-opacity="0.45"/>
<rect x="685" y="182" width="5" height="48" fill="#6a0000"/>
<rect x="685" y="230" width="5" height="1" fill="#6a0000" fill-opacity="0.45"/>
<rect x="686" y="183" width="3" height="46" fill="#cc0000"/>
<rect x="686" y="229" width="3" height="1" fill="#cc0000" fill-opacity="0.45"/>
<rect x="691" y="229" width="5" height="11" fill="#6a0000"/>
<rect x="691" y="240" width="5" height="1" fill="#6a0000" fill-opacity="0.45"/>
<rect x="692" y="230" width="3" height="9" fill="#cc0000"/>
<rect x="692" y="239" width="3" height="1" fill="#cc0000" fill-opacity="0.45"/>
<rect x="697" y="239" width="5" height="5" fill="#114c60"/>
<rect x="697" y="244" width="5" height="1" fill="#114c60" fill-opacity="0.65"/>
<rect x="698" y="240" width="3" height="3" fill="#2f88a2"/>
<rect x="698" y="243" width="3" height="1" fill="#2f88a2" fill-opacity="0.65"/>
</g>
<polyline points="15.5,401.3 21.5,408.5 27.5,420.2 33.5,431.3 39.5,439.7 45.5,451.0 51.5,461.8 57.5,471.0 63.5,473.8 69.5,475.2 75.5,482.2 81.5,476.0 87.5,455.2 93.5,441.8 99.5,434.7 105.5,429.3 111.5,422.3 117.5,421.3 123.5,418.5 129.5,416.2 135.5,410.9 141.5,406.8 147.5,404.0 153.5,407.3 159.5,412.7 165.5,417.2 171.5,425.7 177.5,435.5 183.5,443.8 189.5,458.0 195.5,476.7 201.5,486.2 207.5,486.2 213.5,486.2 219.5,484.2 225.5,482.8 231.5,480.3 237.5,478.8 243.5,478.8 249.5,478.8 255.5,478.8 261.5,478.0 267.5,477.8 273.5,476.2 279.5,476.2 285.5,475.2 291.5,475.2 297.5,475.2 303.5,473.7 309.5,472.2 315.5,470.8 321.5,468.8 327.5,464.7 333.5,460.0 339.5,457.5 345.5,457.2 351.5,456.2 357.5,455.0 363.5,453.3 369.5,452.5 375.5,454.2 381.5,457.5 387.5,461.3 393.5,465.0 399.5,466.7 405.5,470.3 411.5,470.3 417.5,474.2 423.5,469.2 429.5,464.2 435.5,464.2 441.5,462.5 447.5,461.2 453.5,459.2 459.5,458.3 465.5,460.0 471.5,461.3 477.5,463.3 483.5,463.3 489.5,464.2 495.5,467.5 501.5,473.3 507.5,477.5 513.5,481.2 519.5,481.2 525.5,481.2 531.5,480.0 537.5,481.2 543.5,482.5 549.5,484.5 555.5,484.5 561.5,483.5 567.5,483.5 573.5,485.5 579.5,484.5 585.5,480.0 591.5,477.2 597.5,477.2 603.5,478.0 609.5,474.2 615.5,472.0 621.5,469.2 627.5,468.2 633.5,468.2 639.5,469.2 645.5,470.0 651.5,465.0 657.5,463.3 663.5,464.2 669.5,464.2 675.5,461.3 681.5,460.0 687.5,461.2 693.5,462.2 699.5,461.2" fill="none" stroke="#ff0000" stroke-width="1" shape-rendering="crispEdges"/>
<g class="ce" fill="#b4b4b4"><rect x="702" y="459" width="1" height="1"/><rect x="705" y="459" width="1" height="1"/></g>
<text class="t11" x="705.2" y="104" transform="translate(705.2 0) scale(0.96 1) translate(-705.2 0)">97,2</text>
<text class="t11" x="705.2" y="132" transform="translate(705.2 0) scale(0.96 1) translate(-705.2 0)">97</text>
<text class="t11" x="705.2" y="161" transform="translate(705.2 0) scale(0.96 1) translate(-705.2 0)">96,8</text>
<text class="t11" x="705.2" y="189" transform="translate(705.2 0) scale(0.96 1) translate(-705.2 0)">96,6</text>
<text class="t11" x="705.2" y="217" transform="translate(705.2 0) scale(0.96 1) translate(-705.2 0)">96,4</text>
<text class="t11" x="705.2" y="245" transform="translate(705.2 0) scale(0.96 1) translate(-705.2 0)">96,2</text>
<text class="t11" x="705.2" y="274" transform="translate(705.2 0) scale(0.96 1) translate(-705.2 0)">96</text>
<text class="t11" x="705.2" y="302" transform="translate(705.2 0) scale(0.96 1) translate(-705.2 0)">95,8</text>
<text class="t11" x="705.2" y="330" transform="translate(705.2 0) scale(0.96 1) translate(-705.2 0)">95,6</text>
<text class="t11" x="705.2" y="358" transform="translate(705.2 0) scale(0.96 1) translate(-705.2 0)">95,4</text>
<text class="t11" x="705.2" y="430" transform="translate(705.2 0) scale(0.96 1) translate(-705.2 0)">0,5</text>
<text class="t11" x="705.2" y="495" transform="translate(705.2 0) scale(0.96 1) translate(-705.2 0)">0,1</text>
<path d="M703 239.5L708 234H764V245H708Z" fill="#1a1a1a"/>
<text class="w11" x="708.5" y="243">96,22</text>
<g class="ce" fill="#808080">
<rect x="15" y="497" width="1" height="18"/>
<rect x="105" y="497" width="1" height="14"/>
<rect x="171" y="497" width="1" height="14"/>
<rect x="237" y="497" width="1" height="14"/>
<rect x="303" y="497" width="1" height="14"/>
<rect x="369" y="497" width="1" height="14"/>
<rect x="435" y="497" width="1" height="14"/>
<rect x="501" y="497" width="1" height="14"/>
<rect x="567" y="497" width="1" height="14"/>
<rect x="633" y="497" width="1" height="14"/>
<rect x="699" y="497" width="1" height="18"/>
<rect x="585" y="511" width="1" height="14"/>
</g>
<text class="t11" x="19.5" y="510">10:45</text>
<text class="t11" x="109.5" y="510">12:00</text>
<text class="t11" x="175.5" y="510">12:55</text>
<text class="t11" x="241.5" y="510">13:50</text>
<text class="t11" x="307.5" y="510">14:45</text>
<text class="t11" x="373.5" y="510">15:40</text>
<text class="t11" x="439.5" y="510">16:35</text>
<text class="t11" x="505.5" y="510">17:30</text>
<text class="t11" x="571.5" y="510">18:25</text>
<text class="t11" x="637.5" y="510">10:40</text>
<text class="t11" x="703.5" y="510">11:35</text>
<text class="t11" x="589" y="526">02/02/16</text>
<path d="M15 515H66L73 522.5L66 530H15Z" fill="#000"/>
<text class="w11" x="19.5" y="526">01/02/16</text>
<rect class="ce" x="699" y="515" width="49" height="15" fill="#000"/>
<path d="M748 514L757 522.5L748 531Z" fill="#ff0000"/>
<text class="w11" x="703.5" y="526">02/02/16</text>
<text class="t11" x="15.6" y="43" textLength="125.4" lengthAdjust="spacingAndGlyphs">SBER=МБ ЦК(Сбербанк)</text>
<text x="15.9" y="388" style="font-size:11px;fill:#ff1010" textLength="109.6" lengthAdjust="spacingAndGlyphs">STD(SBER=МБ ЦК.Cl)</text>
<g class="ce" fill="#000"><rect x="694" y="36" width="1" height="3"/><rect x="694" y="40" width="1" height="3"/><rect x="693" y="37" width="1" height="3"/><rect x="695" y="37" width="1" height="3"/><rect x="693" y="41" width="1" height="3"/><rect x="695" y="41" width="1" height="3"/><rect x="692" y="38" width="1" height="3"/><rect x="696" y="38" width="1" height="3"/><rect x="692" y="42" width="1" height="3"/><rect x="696" y="42" width="1" height="3"/><rect x="691" y="39" width="1" height="3"/><rect x="697" y="39" width="1" height="3"/><rect x="691" y="43" width="1" height="3"/><rect x="697" y="43" width="1" height="3"/><rect x="690" y="40" width="1" height="3"/><rect x="698" y="40" width="1" height="3"/><rect x="690" y="44" width="1" height="2"/><rect x="698" y="44" width="1" height="2"/></g>
<g class="ce" fill="#000"><rect x="694" y="381" width="1" height="3"/><rect x="694" y="385" width="1" height="3"/><rect x="693" y="382" width="1" height="3"/><rect x="695" y="382" width="1" height="3"/><rect x="693" y="386" width="1" height="3"/><rect x="695" y="386" width="1" height="3"/><rect x="692" y="383" width="1" height="3"/><rect x="696" y="383" width="1" height="3"/><rect x="692" y="387" width="1" height="3"/><rect x="696" y="387" width="1" height="3"/><rect x="691" y="384" width="1" height="3"/><rect x="697" y="384" width="1" height="3"/><rect x="691" y="388" width="1" height="3"/><rect x="697" y="388" width="1" height="3"/><rect x="690" y="385" width="1" height="3"/><rect x="698" y="385" width="1" height="3"/><rect x="690" y="389" width="1" height="2"/><rect x="698" y="389" width="1" height="2"/></g>
<circle cx="450.6" cy="43.6" r="10.15" fill="#dedede" stroke="#c3c3c3" stroke-width="1.8"/>
<circle cx="475.6" cy="43.6" r="10.15" fill="#dedede" stroke="#c3c3c3" stroke-width="1.8"/>
<circle cx="500.6" cy="43.6" r="10.15" fill="#dedede" stroke="#c3c3c3" stroke-width="1.8"/>
<circle cx="525.6" cy="43.6" r="10.15" fill="#dedede" stroke="#c3c3c3" stroke-width="1.8"/>
<circle cx="550.6" cy="43.6" r="10.15" fill="#dedede" stroke="#c3c3c3" stroke-width="1.8"/>
<circle cx="575.6" cy="43.6" r="10.15" fill="#dedede" stroke="#c3c3c3" stroke-width="1.8"/>
<circle cx="600.6" cy="43.6" r="10.15" fill="#dedede" stroke="#c3c3c3" stroke-width="1.8"/>
<circle cx="625.6" cy="43.6" r="10.15" fill="#dedede" stroke="#c3c3c3" stroke-width="1.8"/>
<circle cx="650.6" cy="43.6" r="10.15" fill="#dedede" stroke="#c3c3c3" stroke-width="1.8"/>
<circle cx="675.6" cy="43.6" r="10.15" fill="#dedede" stroke="#c3c3c3" stroke-width="1.8"/>
<path d="M450 37.1L443 43.6L450 50.1Z" fill="#585858"/>
<path d="M458 37.1L451 43.6L458 50.1Z" fill="#585858"/>
<path d="M479.5 37.1L472 43.6L479.5 50.1Z" fill="#585858"/>
<path d="M497 37.1L504.5 43.6L497 50.1Z" fill="#585858"/>
<path d="M518 37.1L525 43.6L518 50.1Z" fill="#585858"/>
<path d="M526 37.1L533 43.6L526 50.1Z" fill="#585858"/>
<circle cx="550.6" cy="43.6" r="7.1" fill="none" stroke="#585858" stroke-width="1.2"/>
<rect x="546.6" y="42.6" width="8" height="2" fill="#585858"/>
<rect x="549.6" y="39.6" width="2" height="8" fill="#585858"/>
<circle cx="575.6" cy="43.6" r="7.1" fill="none" stroke="#585858" stroke-width="1.2"/>
<rect x="571.6" y="42.6" width="8" height="2" fill="#585858"/>
<g stroke="#585858" fill="none"><path d="M593.5 37V49.8M607.5 37V49.8" stroke-width="1.2"/><circle cx="601.4" cy="41.7" r="3.9" stroke-width="2"/><path d="M598.2 44.6L594.4 48.6" stroke-width="1.9"/></g>
<rect x="624.7" y="35.1" width="1.6" height="16.7" fill="#585858"/>
<path d="M618.0 41.65H620.3V38.5L624.0 42.5L620.3 46.5V43.35H618.0Z" fill="#585858"/><path d="M633.0 41.65H630.7V38.5L627.0 42.5L630.7 46.5V43.35H633.0Z" fill="#585858"/>
<rect x="650" y="35.1" width="1" height="16.7" fill="#585858"/><rect x="648.7" y="36.8" width="3.7" height="12.4" fill="#e2e2e2" stroke="#585858" stroke-width="1.2"/>
<path d="M642.1 41.65H644.4V38.5L648.1 42.5L644.4 46.5V43.35H642.1Z" fill="#585858"/><path d="M658.9999999999999 41.65H656.6999999999999V38.5L652.9999999999999 42.5L656.6999999999999 46.5V43.35H658.9999999999999Z" fill="#585858"/>
<path d="M671 37.1L678.2 43.6L671 50.1Z" fill="#585858"/>
<rect x="679" y="37" width="1.5" height="13.2" fill="#585858"/>
<path d="M14.1 7.1L16.2 13L22.3 13.2L17.5 17L19.2 23L14.1 19.5L9 23L10.7 17L5.9 13.2L12 13Z" fill="#12a5ea"/>
<text x="30" y="22" style="font-size:17px;fill:#ffa600" textLength="106" lengthAdjust="spacingAndGlyphs">SBER=МБ ЦК</text>
<text x="148.7" y="21" style="font-size:17px;fill:#ffa600" textLength="22.4" lengthAdjust="spacingAndGlyphs">M5</text>
<g class="ce" fill="#474747">
<rect x="181" y="5" width="1" height="21"/>
<rect x="205" y="5" width="1" height="21"/>
<rect x="232" y="5" width="1" height="21"/>
<rect x="259" y="5" width="1" height="21"/>
<rect x="286" y="5" width="1" height="21"/>
<rect x="313" y="5" width="1" height="21"/>
<rect x="717" y="5" width="1" height="21"/>
</g>
<g class="ce">
<rect x="186" y="11" width="1" height="13" fill="#d8d8d8"/>
<rect x="184" y="13" width="5" height="9" fill="#d8d8d8"/>
<rect x="185" y="14" width="3" height="7" fill="#9a9a9a"/>
<rect x="192" y="7" width="1" height="13" fill="#d8d8d8"/>
<rect x="190" y="9" width="5" height="9" fill="#d8d8d8"/>
<rect x="191" y="10" width="3" height="7" fill="#9a9a9a"/>
<rect x="198" y="6" width="1" height="13" fill="#d8d8d8"/>
<rect x="196" y="8" width="5" height="9" fill="#d8d8d8"/>
<rect x="197" y="9" width="3" height="7" fill="#9a9a9a"/>
</g>
<path d="M213.8 20.7V15.3L222.6 6.9L228.3 12.2L219.5 20.7Z" fill="#bcbcbc"/>
<path d="M220.6 8.8L222.6 6.9L228.3 12.2L226.3 14.2Z" fill="#e9e9e9"/>
<path d="M216.2 15.6L221.4 10.6L224.6 13.7L219.2 18.9Z" fill="#0c0c0c"/>
<path d="M217.2 15.9L221.6 11.7M218.7 17.4L223.1 13.2" stroke="#f4f4f4" stroke-width="0.9" stroke-dasharray="0.9 0.9" fill="none"/>
<rect x="214.3" y="19.2" width="1.3" height="1.3" fill="#fff"/>
<g class="ce"><rect x="238" y="10" width="18" height="1" fill="#8c8c8c"/><rect x="238" y="19" width="18" height="1" fill="#8c8c8c"/>
<g fill="#fff"><rect x="238" y="15" width="18" height="1"/><rect x="238" y="11" width="3" height="5"/><rect x="240" y="9" width="3" height="7"/><rect x="242" y="10" width="3" height="6"/><rect x="244" y="15" width="3" height="3"/><rect x="246" y="15" width="3" height="5"/><rect x="248" y="15" width="3" height="6"/><rect x="250" y="15" width="3" height="3"/><rect x="252" y="12" width="3" height="4"/><rect x="254" y="9" width="2" height="7"/></g><g fill="#6e6e6e"><rect x="239" y="12" width="1" height="3"/><rect x="241" y="10" width="1" height="5"/><rect x="243" y="11" width="1" height="4"/><rect x="245" y="16" width="1" height="1"/><rect x="247" y="16" width="1" height="3"/><rect x="249" y="16" width="1" height="4"/><rect x="251" y="16" width="1" height="1"/><rect x="253" y="13" width="1" height="2"/><rect x="255" y="10" width="1" height="5"/></g></g>
<path d="M268.5 6.5V22L272.3 18.6L274.6 23.6Q276 25 277.6 24Q278.6 23 277.8 21.6L275.6 17.4H280.4Z" fill="#1c1c1c" stroke="#b4b4b4" stroke-width="1.1" stroke-linejoin="miter"/>
<g class="ce" fill="#fff"><rect x="293" y="7" width="3" height="3"/><rect x="293" y="11" width="5" height="3"/><rect x="293" y="15" width="8" height="3"/><rect x="301" y="16" width="8" height="1"/><rect x="293" y="19" width="5" height="3"/></g>
<circle cx="705.6" cy="15" r="9.2" fill="#fff"/>
<g filter="url(#nf)"><text x="705.6" y="20.9" text-anchor="middle" style="font-size:18.5px;font-weight:bold;fill:#111;stroke:#111;stroke-width:0.8px">$</text></g>
<rect x="725.5" y="10.5" width="13" height="11.2" rx="1.5" fill="#a8a8a8" stroke="#000" stroke-width="1"/><rect x="728.3" y="15" width="7.8" height="3.6" rx="1.4" fill="#0a0a0a"/>
<path d="M749.8 10.9L758.2 19.3M758.2 10.9L749.8 19.3" stroke="#000" stroke-width="4.6" stroke-linecap="square" fill="none"/><path d="M749.8 10.9L758.2 19.3M758.2 10.9L749.8 19.3" stroke="#a8a8a8" stroke-width="2.8" stroke-linecap="square" fill="none"/>
</svg></body></html>
